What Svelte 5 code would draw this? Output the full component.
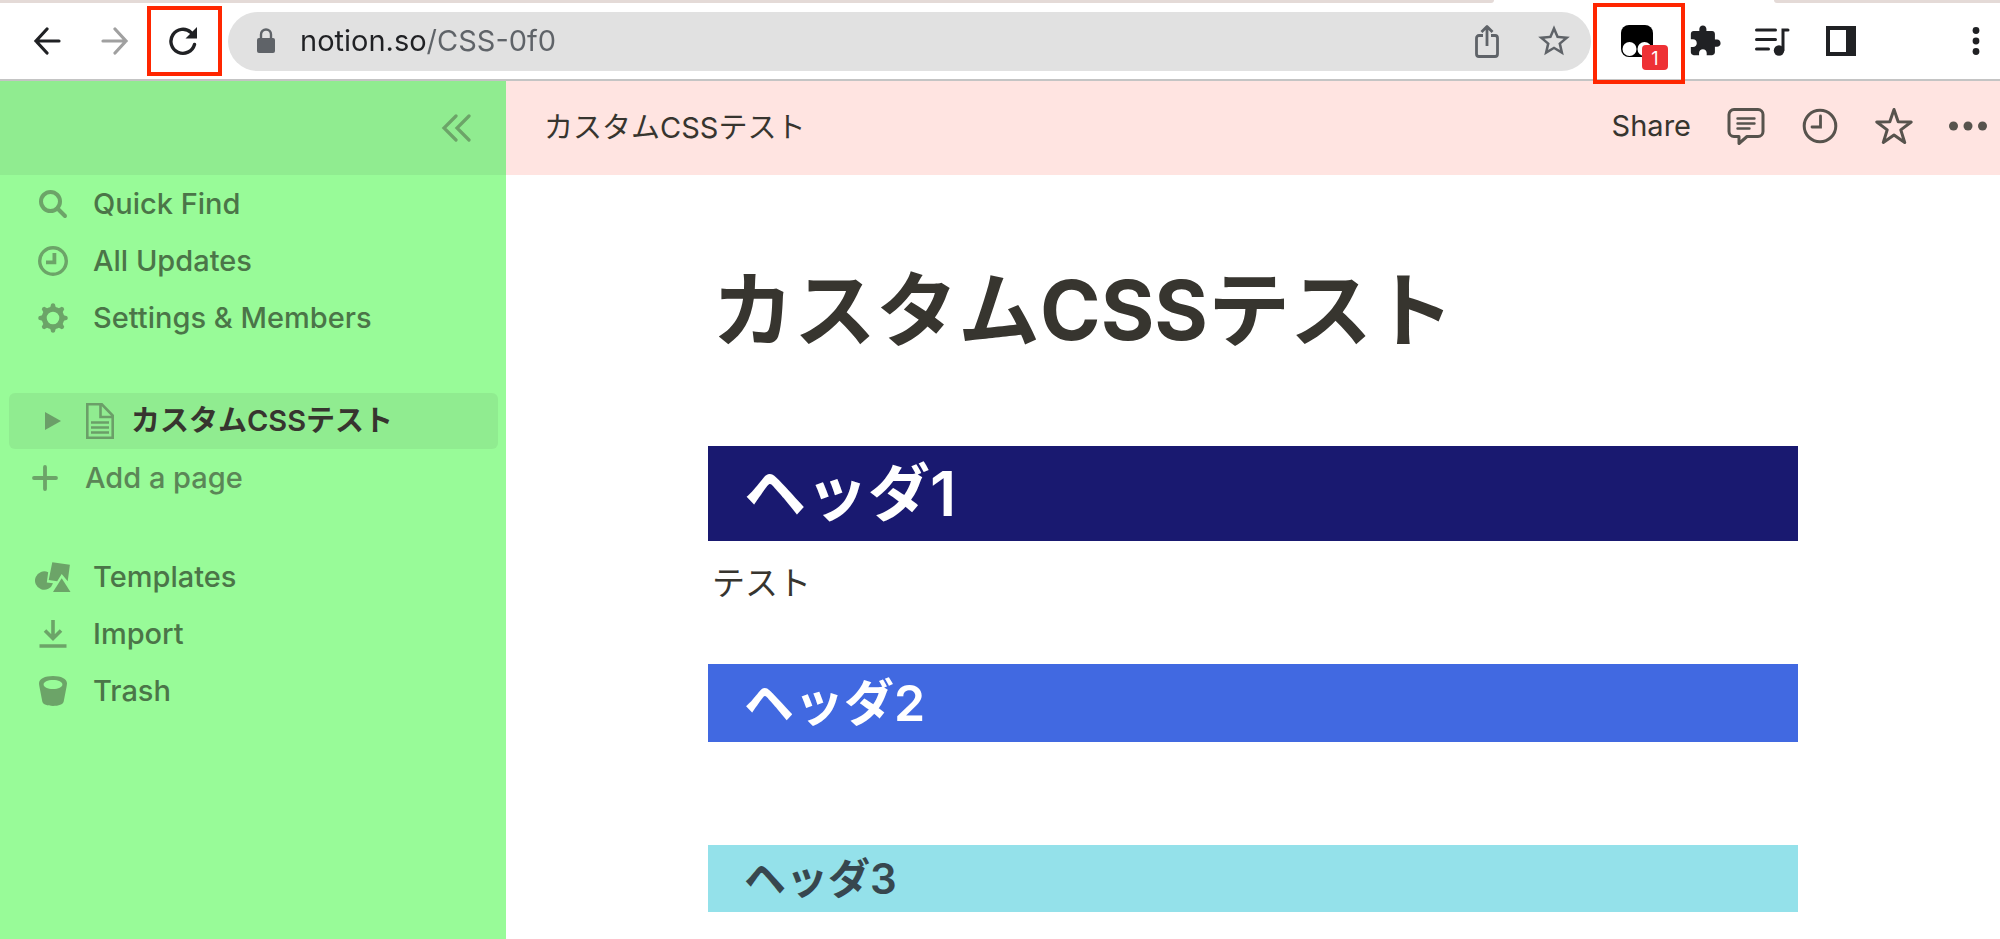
<script lang="ts">
  // Browser window with a Notion page restyled by a user stylesheet.
  type Item = { label: string; icon: string };

  const PAGE = 'カスタムCSSテスト';
  const SPOKES = [0, 45, 90, 135, 180, 225, 270, 315];

  const mainItems: Item[] = [
    { label: 'Quick Find', icon: 'search' },
    { label: 'All Updates', icon: 'clock' },
    { label: 'Settings & Members', icon: 'gear' }
  ];
  const extraItems: Item[] = [
    { label: 'Templates', icon: 'shapes' },
    { label: 'Import', icon: 'import' },
    { label: 'Trash', icon: 'trash' }
  ];

  let url = $state('notion.so/CSS-0f0');
</script>

{#snippet sideIcon(name: string)}
  {#if name === 'search'}
    <svg width="30" height="30" viewBox="0 0 30 30" fill="none" stroke="currentColor" stroke-width="4" stroke-linecap="round"><circle cx="12.5" cy="12.5" r="9.5" /><path d="M19.5 19.5 27 27" /></svg>
  {:else if name === 'clock'}
    <svg width="30" height="30" viewBox="0 0 30 30" fill="none" stroke="currentColor"><circle cx="15" cy="15" r="13.3" stroke-width="3.4" /><path d="M16.4 7v9.4H8" stroke-width="3.8" /></svg>
  {:else if name === 'gear'}
    <svg width="30" height="30" viewBox="0 0 30 30" fill="currentColor">
      <circle cx="15" cy="15" r="8.8" fill="none" stroke="currentColor" stroke-width="5" />
      {#each SPOKES as deg}
        <path d="M12 5 13.2.9Q15-.4 16.8.9L18 5z" transform="rotate({deg} 15 15)" />
      {/each}
    </svg>
  {:else if name === 'shapes'}
    <svg width="36" height="30" viewBox="0 0 36 30" fill="currentColor">
      <path d="M13.2 10.2A9.2 9.2 0 1 0 18 21.2l-6.2-.8z" />
      <path d="m17.3.3 17.6 2.4-2.2 16.5-6-7.200-4.500 7.200-8.500-1.200z" />
      <path d="M26.7 16.2 35.5 30H18z" />
    </svg>
  {:else if name === 'import'}
    <svg width="28" height="28" viewBox="0 0 28 28" fill="none" stroke="currentColor" stroke-width="3.6"><path d="M14 0v18M6 10.5l8 8 8-8M.5 26h27" /></svg>
  {:else}
    <svg width="28" height="30" viewBox="0 0 28 30" fill="currentColor"><path fill-rule="evenodd" d="M14 0c8 0 14 2.8 14 7.2 0 .8-.2 2-.4 3.2l-2.9 15.2C24.2 28.6 19.5 30 14 30S3.8 28.6 3.3 25.6L.4 10.4C.2 9.2 0 8 0 7.2 0 2.8 6 0 14 0zm0 4C8.500 4 4.600 5.900 4.600 8.400S8.500 12.900 14 12.900s9.400-2 9.400-4.500S19.500 4 14 4z" /></svg>
  {/if}
{/snippet}

{#snippet sideRow(item: Item)}
  <li>
    <a class="row" href="#{item.icon}">
      <span class="row-icon">{@render sideIcon(item.icon)}</span>
      <span>{item.label}</span>
    </a>
  </li>
{/snippet}

<div class="window" lang="ja">
  <div class="tabs">
    <span class="tab-rest grow"></span>
    <span class="tab-active"></span>
    <span class="tab-rest end"></span>
  </div>

  <header class="toolbar">
    <button class="tool" type="button" aria-label="Back">
      <svg width="28" height="28" viewBox="0 0 28 28" fill="none" stroke="currentColor" stroke-width="3.2" stroke-linecap="round"><path d="M26 14H3M14 2 3 14l11 12" /></svg>
    </button>
    <button class="tool off" type="button" aria-label="Forward" disabled>
      <svg width="28" height="28" viewBox="0 0 28 28" fill="none" stroke="currentColor" stroke-width="3.2" stroke-linecap="round"><path d="M2 14h23M14 2l11 12-11 12" /></svg>
    </button>
    <button class="tool" type="button" aria-label="Reload">
      <svg width="30" height="30" viewBox="0 0 30 30"><path d="M26.5 18.5A12 12 0 1 1 23 6.4" fill="none" stroke="currentColor" stroke-width="3.4" stroke-linecap="round" /><path d="M29 1v11.5H17.5z" fill="currentColor" /></svg>
      <span class="mark reload-mark"></span>
    </button>

    <div class="address">
      <svg class="lock" width="18" height="26" viewBox="0 0 18 26"><rect y="10" width="18" height="15" rx="2" fill="currentColor" /><path d="M4 11V6.5a5 5 0 0 1 10 0V11" fill="none" stroke="currentColor" stroke-width="2.4" /></svg>
      <input class="url" type="text" aria-label="Address" spellcheck="false" bind:value={url} />
      <button class="bar-btn" type="button" aria-label="Share this page">
        <svg width="24" height="34" viewBox="0 0 24 34" fill="none" stroke="currentColor" stroke-width="2.8" stroke-linejoin="round"><path d="M8 11.5H4A2.500 2.500 0 0 0 1.500 14v16A2.500 2.500 0 0 0 4 32.500h16a2.500 2.500 0 0 0 2.500-2.500V14a2.500 2.500 0 0 0-2.500-2.500h-4M12 22V2.500M6.500 8 12 2.500 17.500 8" /></svg>
      </button>
      <button class="bar-btn" type="button" aria-label="Bookmark">
        <svg width="38" height="38" viewBox="0 0 24 24" fill="currentColor"><path d="M22 9.24l-7.19-.62L12 2 9.19 8.63 2 9.24l5.46 4.73L5.82 21 12 17.27 18.18 21l-1.63-7.03L22 9.24zM12 15.4l-3.76 2.27 1-4.28-3.32-2.88 4.38-.38L12 6.1l1.71 4.04 4.38.38-3.32 2.88 1 4.28L12 15.4z" /></svg>
      </button>
    </div>

    <button class="tool" type="button" aria-label="Tampermonkey">
      <svg width="32" height="32" viewBox="0 0 32 32"><rect width="32" height="32" rx="8" /><circle cx="8.5" cy="24" r="7" fill="#fff" /><circle cx="23.5" cy="24" r="7" fill="#fff" /></svg>
      <span class="badge">1</span>
      <span class="mark ext-mark"></span>
    </button>
    <button class="tool" type="button" aria-label="Extensions">
      <svg width="34" height="34" viewBox="0 0 24 24" fill="currentColor"><path d="M20.5 11H19V7c0-1.1-.9-2-2-2h-4V3.5C13 2.12 11.88 1 10.5 1S8 2.12 8 3.5V5H4c-1.1 0-1.99.9-1.99 2v3.8H3.5c1.49 0 2.7 1.21 2.7 2.7s-1.21 2.7-2.7 2.7H2V20c0 1.1.9 2 2 2h3.8v-1.5c0-1.49 1.21-2.7 2.7-2.7s2.7 1.21 2.7 2.7V22H17c1.1 0 2-.9 2-2v-4h1.5c1.38 0 2.5-1.12 2.5-2.5S21.88 11 20.5 11z" /></svg>
    </button>
    <button class="tool" type="button" aria-label="Media controls">
      <svg width="36" height="30" viewBox="0 0 36 30" fill="none" stroke="currentColor" stroke-width="3" stroke-linecap="round"><path d="M1.500 4h19M1.500 13.500h19M1.500 23h12M28 24V4h5" /><circle cx="24" cy="24.500" r="5.200" fill="currentColor" stroke="none" /></svg>
    </button>
    <button class="tool" type="button" aria-label="Side panel">
      <svg width="30" height="30" viewBox="0 0 30 30"><path fill="currentColor" fill-rule="evenodd" d="M0 0h30v30H0zM4 4v22h16V4z" /></svg>
    </button>
    <button class="tool menu" type="button" aria-label="Menu">
      <svg width="8" height="28" viewBox="0 0 8 28" fill="currentColor"><circle cx="4" cy="3.5" r="3.4" /><circle cx="4" cy="14" r="3.4" /><circle cx="4" cy="24.5" r="3.4" /></svg>
    </button>
  </header>

  <div class="app">
    <aside class="sidebar">
      <div class="side-head">
        <button class="icon-btn collapse" type="button" aria-label="Close sidebar">
          <svg width="30" height="28" viewBox="0 0 30 28" fill="none" stroke="currentColor" stroke-width="3.2" stroke-linecap="round"><path d="M15 2 3 14l12 12M28 2 16 14l12 12" /></svg>
        </button>
      </div>

      <nav>
        <ul>
          {#each mainItems as item}
            {@render sideRow(item)}
          {/each}
        </ul>

        <div class="pages">
          <a class="page-link" href="#page">
            <svg width="16" height="18" viewBox="0 0 16 18" fill="currentColor"><path d="M0 0l16 9-16 9z" /></svg>
            <svg width="28" height="36" viewBox="0 0 28 36" fill="none" stroke="currentColor" stroke-width="2.6"><path d="M1.3 1.3h14.500L26.700 12.500v22.200H1.300zM14.500 1.500v12.500h12M5 19.500h18M5 24.500h18M5 29.500h18" /></svg>
            <span>{PAGE}</span>
          </a>
          <button class="add" type="button">
            <svg width="26" height="26" viewBox="0 0 26 26" fill="none" stroke="currentColor" stroke-width="3.8" stroke-linecap="round"><path d="M13 2v22M2 13h22" /></svg>
            <span>Add a page</span>
          </button>
        </div>

        <ul>
          {#each extraItems as item}
            {@render sideRow(item)}
          {/each}
        </ul>
      </nav>
    </aside>

    <div class="content">
      <div class="topbar">
        <a class="crumb" href="#page">{PAGE}</a>
        <div class="actions">
          <button class="share" type="button">Share</button>
          <button class="icon-btn" type="button" aria-label="Comments">
            <svg width="38" height="38" viewBox="0 0 38 38" fill="none" stroke="currentColor" stroke-width="3" stroke-linejoin="round" stroke-linecap="round"><path d="M7 2.500h24a5 5 0 0 1 5 5v17a5 5 0 0 1-5 5H20l-8 7v-7H7a5 5 0 0 1-5-5v-17a5 5 0 0 1 5-5z" /><path d="M10.500 11.500h17M10.500 16.500h17M10.500 21.500h12" stroke-width="2.400" /></svg>
          </button>
          <button class="icon-btn" type="button" aria-label="Updates">
            <svg width="38" height="38" viewBox="0 0 38 38" fill="none" stroke="currentColor" stroke-width="3" stroke-linecap="round"><circle cx="19" cy="19" r="15.800" /><path d="M19.500 9v11H11" stroke-width="2.800" /></svg>
          </button>
          <button class="icon-btn" type="button" aria-label="Favorite">
            <svg width="38" height="38" viewBox="0 0 38 38" fill="none" stroke="currentColor" stroke-width="3" stroke-linejoin="round"><path d="M19 2.500l4.200 12.300 13 .2-10.400 7.900 3.900 12.600L19 28 8.300 35.500l3.900-12.600L1.800 15l13-.2z" /></svg>
          </button>
          <button class="icon-btn" type="button" aria-label="More">
            <svg width="38" height="10" viewBox="0 0 38 10" fill="currentColor"><circle cx="4.500" cy="5" r="4.500" /><circle cx="19" cy="5" r="4.500" /><circle cx="33.500" cy="5" r="4.500" /></svg>
          </button>
        </div>
      </div>

      <main class="doc">
        <h1>{PAGE}</h1>
        <h2 class="head one">ヘッダ1</h2>
        <p>テスト</p>
        <h3 class="head two">ヘッダ2</h3>
        <h4 class="head three">ヘッダ3</h4>
      </main>
    </div>
  </div>
</div>

<style>
  :global(body) {
    background: #fff;
  }
  .window {
    display: flex;
    flex-direction: column;
    min-height: 100vh;
    font-family: Inter, 'Noto Sans CJK JP', sans-serif;
    color: #37352f;
  }
  button,
  input {
    margin: 0;
    padding: 0;
    border: 0;
    background: none;
    font: inherit;
    color: inherit;
  }
  button {
    cursor: pointer;
  }
  a {
    color: inherit;
    text-decoration: none;
  }
  svg {
    display: block;
    flex-shrink: 0;
  }
  ul {
    margin: 0;
    padding: 0;
    list-style: none;
  }

  /* browser chrome */
  .tabs {
    display: flex;
    height: 3px;
  }
  .tab-rest {
    background: #e4dad7;
  }
  .tab-rest.grow {
    flex: 1;
    border-bottom-right-radius: 3px;
  }
  .tab-active {
    width: 280px;
  }
  .tab-rest.end {
    width: 226px;
    border-bottom-left-radius: 3px;
  }
  .toolbar {
    display: flex;
    align-items: center;
    height: 76px;
    padding-left: 13px;
    border-bottom: 2px solid #c4c4c4;
    color: #202124;
  }
  .tool {
    position: relative;
    display: flex;
    align-items: center;
    justify-content: center;
    flex-shrink: 0;
    width: 68px;
    height: 60px;
  }
  .tool.off {
    color: #a0a0a0;
  }
  .tool.menu {
    width: 48px;
    margin-left: 77px;
  }
  .mark {
    position: absolute;
    border: 4px solid #ff2600;
    pointer-events: none;
  }
  .reload-mark {
    inset: -5px -5px -5px -2px;
  }
  .ext-mark {
    inset: -8px -14px -13px -10px;
  }
  .badge {
    position: absolute;
    left: 39px;
    top: 34px;
    width: 26px;
    height: 25px;
    border-radius: 4px;
    background: #ee3135;
    color: #fff;
    font-size: 18px;
    line-height: 28px;
  }
  .address {
    display: flex;
    align-items: center;
    flex: 1;
    gap: 36px;
    height: 59px;
    margin: 0 12px 0 11px;
    padding: 0 18px 0 29px;
    border-radius: 30px;
    background: #e1e1e1;
    color: #5f6368;
  }
  .lock {
    margin-right: -11px;
  }
  .url {
    flex: 1;
    min-width: 0;
    font-size: 29px;
    line-height: 40px;
    outline: none;
    /* host in dark, path in grey */
    background: linear-gradient(90deg, #202124 127px, #5f6368 127px);
    -webkit-background-clip: text;
    background-clip: text;
    -webkit-text-fill-color: transparent;
  }

  /* sidebar */
  .app {
    display: flex;
    flex: 1;
  }
  .sidebar {
    flex-shrink: 0;
    width: 506px;
    background: #98fb98;
    color: #4b7548;
    font-size: 29px;
    line-height: 40px;
    font-weight: 500;
  }
  .side-head {
    display: flex;
    align-items: center;
    justify-content: flex-end;
    height: 94px;
    padding-right: 35px;
    background: #90ec90;
  }
  .collapse,
  .row-icon {
    color: #6ca468;
  }
  .row {
    display: flex;
    align-items: center;
    gap: 22px;
    height: 57px;
    padding-left: 35px;
  }
  .row-icon {
    display: flex;
    justify-content: center;
    width: 36px;
  }
  .pages {
    padding: 47px 8px 42px 9px;
  }
  .page-link {
    display: flex;
    align-items: center;
    height: 56px;
    padding-left: 36px;
    border-radius: 6px;
    background: #90ec90;
    color: #37352f;
    font-weight: 600;
  }
  .page-link svg {
    margin-right: 25px;
    color: #6b9f68;
  }
  .page-link svg + svg {
    margin-right: 17px;
  }
  .add {
    display: flex;
    align-items: center;
    gap: 27px;
    width: 100%;
    height: 57px;
    padding-left: 23px;
    color: #5b8657;
  }
  .add svg {
    color: #6ca468;
  }

  /* page */
  .content {
    flex: 1;
    min-width: 0;
  }
  .topbar {
    display: flex;
    align-items: center;
    justify-content: space-between;
    height: 94px;
    padding: 0 13px 0 38px;
    background: #ffe4e1;
    font-size: 29px;
    line-height: 40px;
  }
  .actions {
    display: flex;
    align-items: center;
    gap: 36px;
    padding-bottom: 4px;
  }
  .icon-btn {
    display: flex;
  }
  .actions .icon-btn {
    color: #57534d;
  }
  .doc {
    max-width: 1090px;
    margin: 0 auto;
    padding: 88px 0 26px;
  }
  h1 {
    margin: 0 0 87px;
    padding-left: 4px;
    font-size: 82px;
    line-height: 96px;
    font-weight: 700;
  }
  .head {
    margin: 0;
    padding: 0 36px;
    font-weight: 600;
    color: #fff;
  }
  .one {
    font-size: 62px;
    line-height: 95px;
    background: #191970;
  }
  p {
    margin: 18px 0 57px;
    padding-left: 4px;
    font-size: 33px;
    line-height: 48px;
  }
  .two {
    font-size: 50px;
    line-height: 78px;
    background: #4169e1;
  }
  .three {
    margin-top: 103px;
    font-size: 42px;
    line-height: 67px;
    background: #94e1ea;
    color: #37474f;
  }
</style>
